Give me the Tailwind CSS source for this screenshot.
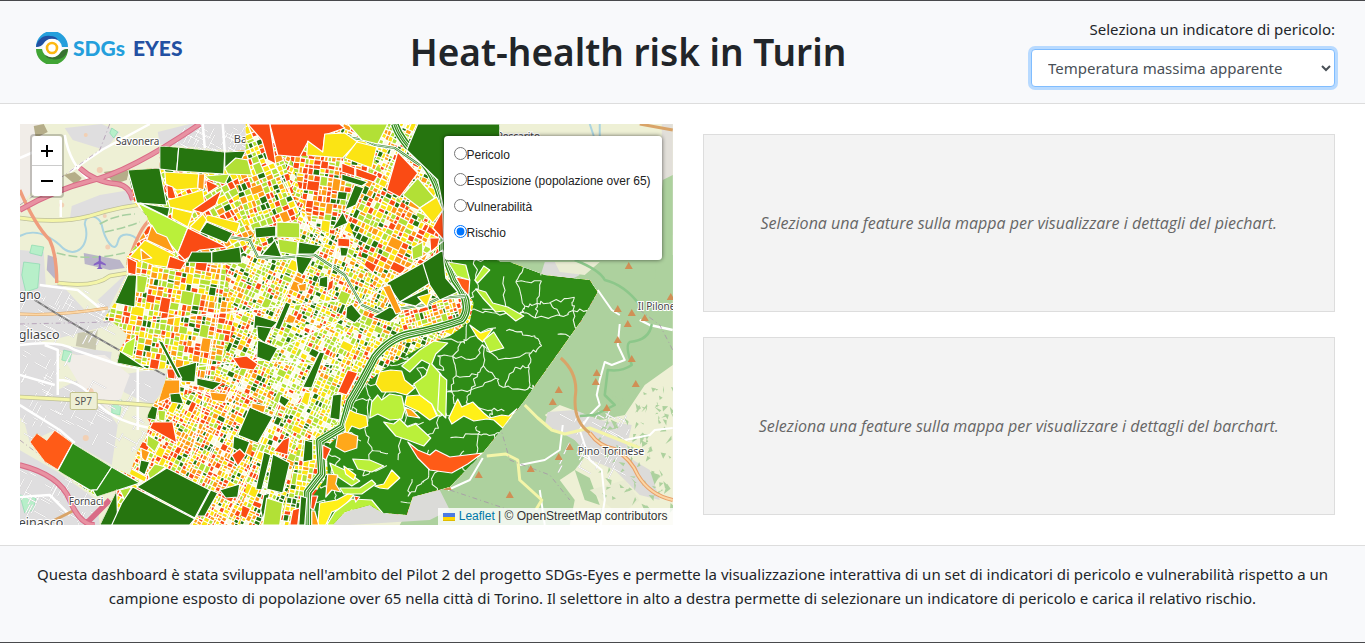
<!DOCTYPE html>
<html lang="it">
<head>
<meta charset="utf-8">
<meta name="viewport" content="width=device-width, initial-scale=1">
<title>Heat-health risk in Turin</title>
<script src="https://cdn.jsdelivr.net/npm/@tailwindcss/browser@4"></script>
</head>
<body class="flex min-h-screen flex-col border-y border-[#48494c] bg-white font-['Noto_Sans',sans-serif] text-[15px] leading-6 text-[#212529]">

<header class="flex items-center justify-between border-b border-[#ddd] bg-[#f8f9fb] px-[30px] py-4">
  <a href="#" class="flex w-[195px] items-center gap-[5px] pb-2 pl-[6px] font-[Lato,sans-serif] text-[21px] leading-8 font-black" aria-label="SDGs EYES">
    <svg class="size-8 shrink-0" viewBox="0 0 32 32" aria-hidden="true">
      <path d="M0 15A16 16 0 0 1 32 15H26A10 10 0 0 0 7 12Q5 14 0 15Z" fill="#249fdc"/>
      <path d="M0 15C1 8 7 3 14 4Q20 4 22 8Q12 4 7 12Q5 15 0 15Z" fill="#2250a2"/>
      <path d="M0 17A16 16 0 0 0 32 17Q27 17 25 20A10 10 0 0 1 6 17Z" fill="#41a535"/>
      <path d="M32 17C31 25 23 29 16 27Q11 27 9 23Q19 29 25 20Q27 17 32 17Z" fill="#387231"/>
      <circle cx="16" cy="16" r="9" fill="#fff"/>
      <circle cx="16" cy="16" r="5" fill="#fff" stroke="#fdb913" stroke-width="2.6"/>
    </svg>
    <span class="flex gap-2"><span class="text-[#249fdc]">SDGs</span><span class="text-[#2250a2]">EYES</span></span>
  </a>
  <h1 class="text-[37px] leading-[48px] font-semibold">Heat-health risk in Turin</h1>
  <div class="flex w-76 flex-col gap-2">
    <label for="indicator" class="text-right">Seleziona un indicatore di pericolo:</label>
    <select id="indicator" class="h-[38px] rounded border border-[#80bdff] bg-white px-3 text-[#495057] ring-3 ring-[#b8daff] outline-none">
      <option>Temperatura massima apparente</option>
    </select>
  </div>
</header>

<main class="grid grid-cols-2 gap-5 p-5">
  <section class="relative h-[401px] overflow-hidden bg-[#f2efe9] font-['Liberation_Sans',sans-serif]" aria-label="Mappa">
    <svg class="block h-full w-full" viewBox="20 124 653 401" preserveAspectRatio="xMidYMid slice" aria-hidden="true">
      <defs>
        <clipPath id="city"><path d="M160 146L225 152L246 150L246 124H500V262L510 262L545 275L590 280L598 292L582 320L523 403L483 453L450 487L413 497L407 515L383 513L370 505L345 512L333 525H100L117 490L97 497L58 470L45 462L30 442L37 433L47 440L55 430L73 443L112 467L130 475L137 452L147 435L150 422L147 417L153 405L160 397L167 377L168 368L147 370L117 363L120 350L128 335L113 322L103 320L115 303L127 275L127 257L135 247L148 227L148 217L135 203L128 170L160 168Z"/></clipPath>
        <clipPath id="hill"><path d="M443 252L510 262L545 275L590 280L598 292L582 320L523 403L483 453L450 487L413 497L407 515L383 513L370 505L345 512L333 525H312L314 495L328 475L327 447L345 430L352 405L368 382L390 365L420 348L450 336L470 322L474 303L458 275Z"/></clipPath>
      </defs>
      <!-- land cover -->
      <path d="M20 124H673V525H20Z" fill="#eef0d5"/>
      <g fill="#dfdedf">
        <path d="M20 340L60 345L112 352L110 365L60 350L58 390L78 380L75 440L20 418Z"/>
        <path d="M20 250L44 252L46 285L62 285L85 310L110 310L112 325L60 338L20 345Z"/>
        <path d="M120 375L150 370L168 374L160 395L152 405L140 400L124 392Z"/>
        <path d="M20 405L60 430L80 380L100 400L118 425L112 465L73 443L55 430L30 442Z"/>
        <path d="M20 450L58 472L97 500L100 525H20Z"/>
        <path d="M190 124H250V152L160 144L158 132Z"/>
        <path d="M73 140L105 150L120 132L102 124L65 128Z"/>
        <path d="M100 195L130 190L133 205L100 212L70 220L72 206Z"/>
        <path d="M98 300L128 272L108 310Z"/>
      </g>
      <path d="M20 124H40L45 140L34 190L20 205ZM62 355L105 355L130 375L115 415L80 385Z" fill="#f1ede8"/>
      <path d="M662 124H673V235H662Z" fill="#e2dfd9"/>
      <g fill="#b5ad89"><path d="M34 126L44 124L48 132L36 138ZM64 175L75 172L82 178L76 185ZM104 172L130 168L127 180L115 184Z"/><path d="M78 333L98 330L96 350L76 346Z" fill="#c9c8b0"/></g>
      <g fill="#add19e">
        <path d="M480 255H673V365L645 385L625 415L600 420L560 405L545 415L575 440L590 450L575 470L560 480L575 500L570 525H400L415 498L480 455L590 300Z"/>
        <path d="M663 180L673 175V300L655 280Z"/>
        <path d="M575 470L590 478L600 505L585 500ZM645 470L660 475L652 490Z"/>
      </g>
      <path d="M548 412L575 410L600 420L632 425L625 455L650 470L660 500L640 495L615 470L592 460L575 440L560 432L545 425Z" fill="#dcdbd9"/>
      <path d="M540 278L545 262L570 262L580 275L560 285ZM370 500L412 497L440 490L450 510L430 520L350 525H333L345 513Z" fill="#dbdbd8"/>
      <path d="M555 262L600 262L585 275L560 272ZM590 490L625 480L640 500L620 515Z" fill="#e9ecd2"/>
      <g fill="#b7efc9" stroke="#7fd7aa" stroke-width=".6"><path d="M24 262L40 264L38 288L26 292L22 275Z"/><path d="M32 245L44 247L42 256L30 253ZM64 350L72 352L70 362L62 360ZM112 402L122 400L120 415L112 413ZM112 128L118 132L114 138L110 133ZM20 495L36 498L34 510L25 513Z"/></g>
      <path d="M84 253L120 260L125 268L110 270L85 264ZM48 255L57 258L55 279L47 270Z" fill="#bab5c9"/>
      <g fill="#f2d0b4"><circle cx="100" cy="170" r="3"/><circle cx="86" cy="135" r="2"/><circle cx="62" cy="205" r="2.5"/><circle cx="108" cy="247" r="2.5"/><circle cx="90" cy="392" r="4"/><circle cx="86" cy="438" r="3"/><circle cx="105" cy="216" r="2"/></g>
      <g id="streets" fill="none" stroke="#fff" stroke-width="1"></g>
      <!-- water -->
      <path d="M20 236C35 228 50 236 60 245C75 262 92 245 85 224C86 212 100 216 102 225C105 240 115 255 118 242C120 232 132 232 140 242L148 236M590 124L594 136M600 124V136" fill="none" stroke="#aad3df" stroke-width="2"/>
      <path d="M57 253Q90 262 128 252M100 224Q115 215 135 214M105 232Q125 228 140 222" fill="none" stroke="#a7cfa0" stroke-width="1.5" stroke-dasharray="9 3"/>
      <!-- roads -->
      <g fill="none" stroke-linejoin="round">
        <path d="M20 345Q60 340 75 350L120 365L150 370M45 345L58 350V395M20 375L55 385M20 405L60 430L75 443M58 380Q80 380 95 400Q110 420 150 428M65 135Q70 165 90 180M61 200V217M40 285L78 290L105 312M20 158L50 145M138 360V430M70 172L102 150L150 124M203 124L205 148M223 124L225 152M20 497L50 495L70 515M673 330L650 325L640 320" stroke="#fff" stroke-width="2.5"/>
        <path d="M620 324L618 345L625 360L612 365L605 362L600 380L597 395L600 405L590 415L580 430L590 460L602 470L605 500L601 525M563 425L560 450L545 460L520 465M448 490L470 480L483 458M540 490L545 525M625 440L650 435L655 430L673 428M598 290L612 310L620 315" stroke="#fff" stroke-width="2"/>
        <path d="M20 218Q60 224 90 216Q125 205 150 204M58 283Q95 288 110 276L128 273M20 397Q85 400 160 406" stroke="#bdbe9a" stroke-width="4.4"/>
        <path d="M20 218Q60 224 90 216Q125 205 150 204M58 283Q95 288 110 276L128 273M20 397Q85 400 160 406M525 405L538 418L552 430L565 434L590 428L620 440L640 448" stroke="#f4f5a8" stroke-width="3"/>
        <path d="M487 456L506 454L518 460L520 480L542 500L536 510" stroke="#f4f5a8" stroke-width="3"/>
        <path d="M20 190Q35 225 50 240Q57 255 57 283M130 258Q140 228 150 220" stroke="#ef9d7d" stroke-width="3.4"/>
        <path d="M561 358Q577 372 576 392Q572 420 590 433M20 314Q60 316 108 308M640 124L673 130M45 525L75 510" stroke="#d9a468" stroke-width="3"/>
        <path d="M590 433Q600 447 615 449Q632 460 638 475Q650 495 673 500" stroke="#e7a06a" stroke-width="4"/>
        <path d="M590 433Q600 447 615 449Q632 460 638 475Q650 495 673 500M20 314Q60 316 108 308" stroke="#fcd6a4" stroke-width="2"/>
        <path d="M20 210Q55 190 90 181Q130 172 200 124M80 168Q95 182 118 184Q130 186 133 200M20 465Q60 475 70 500Q80 525 95 525M110 500L85 525" stroke="#d96b87" stroke-width="5.5"/>
        <path d="M20 210Q55 190 90 181Q130 172 200 124M80 168Q95 182 118 184Q130 186 133 200M20 465Q60 475 70 500Q80 525 95 525" stroke="#e892a2" stroke-width="3.5"/>
        <path d="M35 300Q90 335 165 375" stroke="#777" stroke-width="1.8"/>
        <path d="M35 300Q90 335 165 375" stroke="#ddd" stroke-width=".6" stroke-dasharray="4 4"/>
        <path d="M652 324Q650 340 630 342Q625 345 632 365Q622 372 608 370L605 395L615 405L595 415L580 416M575 260Q600 270 605 280Q625 285 640 305" stroke="#8cc78a" stroke-width="2.5"/>
        <path d="M20 205L65 175L100 150L110 124M20 324L110 322M20 440L60 470M500 425L510 460L550 475L570 500M640 310L660 325L673 350M450 490L510 510L530 525" stroke="#a58baa" stroke-width="1" stroke-dasharray="5 3 1 3" opacity=".7"/>
      </g>
      <g id="peaks" fill="#d08f55"></g>
      <g class="font-['Noto_Sans',sans-serif]" fill="#444" stroke="#fff" stroke-width="2" paint-order="stroke" font-size="10">
        <text x="116" y="145">Savonera</text>
        <text x="234" y="143" font-size="11">Bar</text>
        <text x="497" y="140">Pescarito</text>
        <text x="19" y="299" font-size="12">gno</text>
        <text x="19" y="339" font-size="12.5">gliasco</text>
        <text x="638" y="310">Il Pilone</text>
        <text x="578" y="455" font-size="10.5">Pino Torinese</text>
        <text x="69" y="505">Fornaci</text>
        <text x="19" y="527" font-size="12.5">einasco</text>
      </g>
      <rect x="70.500" y="392.500" width="27" height="17" rx="1.500" fill="#eeefd5" stroke="#c1c18a"/>
      <text x="75" y="405" class="font-['Noto_Sans',sans-serif]" font-size="10" fill="#555">SP7</text>
      <path d="M99 256Q100 255 101 256V261L106 264V265.500L101 264V267L103 269H97L99 267V264L94 265.500V264L99 261Z" fill="#8461c4"/>
      <!-- census sections, filled by the script below -->
      <g clip-path="url(#city)" stroke-linejoin="round">
        <path d="M20 124H673V525H20Z" fill="#fdfdf6"/>
        <g id="mesh"></g>
        <g id="hills" clip-path="url(#hill)"></g>
        <g id="avenues" fill="none"></g>
        <g id="sections" stroke="#fff" stroke-width="1.2"></g>
      </g>
    </svg>

    <div class="absolute top-[10px] left-[10px] flex flex-col rounded border-2 border-black/20 bg-clip-padding text-center text-[22px] leading-[30px] font-bold text-black">
      <button type="button" class="size-[30px] rounded-t-sm border-b border-[#ccc] bg-white" aria-label="Zoom in"><svg class="mx-auto size-3" viewBox="0 0 12 12"><path d="M6 0V12M0 6H12" stroke="#000" stroke-width="2"/></svg></button>
      <button type="button" class="size-[30px] rounded-b-sm bg-white" aria-label="Zoom out"><svg class="mx-auto size-3" viewBox="0 0 12 12"><path d="M0 6H12" stroke="#000" stroke-width="2"/></svg></button>
    </div>

    <fieldset class="absolute top-3 right-[11px] flex w-[218px] flex-col rounded bg-white px-[10px] pt-[6px] pb-[14px] text-xs leading-[26px] text-[#222] shadow-[0_0_4px_rgba(0,0,0,0.6)]">
      <label class="flex items-center"><input type="radio" name="layer" class="mb-1 size-[13px]"><span>Pericolo</span></label>
      <label class="flex items-center"><input type="radio" name="layer" class="mb-1 size-[13px]"><span class="whitespace-nowrap">Esposizione (popolazione over 65)</span></label>
      <label class="flex items-center"><input type="radio" name="layer" class="mb-1 size-[13px]"><span>Vulnerabilità</span></label>
      <label class="flex items-center"><input type="radio" name="layer" class="mb-1 size-[13px]" checked><span>Rischio</span></label>
    </fieldset>

    <div class="absolute right-0 bottom-0 flex items-center gap-1 bg-white/80 px-[5px] text-xs leading-[17px] text-[#333]">
      <svg class="h-2 w-3" viewBox="0 0 12 8" aria-hidden="true"><path fill="#4C7BE1" d="M0 0h12v4H0z"/><path fill="#FFD500" d="M0 4h12v3H0z"/><path fill="#E0BC00" d="M0 7h12v1H0z"/></svg>
      <span><a href="#" class="text-[#0078a8]">Leaflet</a> | © OpenStreetMap contributors</span>
    </div>
  </section>

  <section class="flex flex-col gap-[25px] p-[10px] font-['Open_Sans',sans-serif] text-base text-[#666] italic">
    <div class="flex flex-1 items-center justify-center border border-[#ddd] bg-[#f3f3f3] text-center"><p>Seleziona una feature sulla mappa per visualizzare i dettagli del piechart.</p></div>
    <div class="flex flex-1 items-center justify-center border border-[#ddd] bg-[#f3f3f3] text-center"><p>Seleziona una feature sulla mappa per visualizzare i dettagli del barchart.</p></div>
  </section>
</main>

<footer class="flex-1 border-t border-[#ddd] bg-[#f8f9fb] px-5 pt-4 text-center">
  <p>Questa dashboard è stata sviluppata nell'ambito del Pilot 2 del progetto SDGs-Eyes e permette la visualizzazione interattiva di un set di indicatori di pericolo e vulnerabilità rispetto a un campione esposto di popolazione over 65 nella città di Torino. Il selettore in alto a destra permette di selezionare un indicatore di pericolo e carica il relativo rischio.</p>
</footer>

<script>
const NS = 'http://www.w3.org/2000/svg';
let seed = 4711;
const rnd = () => { seed = (seed * 1664525 + 1013904223) >>> 0; return seed / 4294967296; };
const byId = id => document.getElementById(id);
const add = (parent, d, attrs) => {
  const p = document.createElementNS(NS, 'path');
  p.setAttribute('d', d);
  for (const k in attrs) p.setAttribute(k, attrs[k]);
  parent.appendChild(p);
  return p;
};
const D = '#26750f', G = '#2f8c17', L = '#b2e036', l = '#baf03a', Y = '#fbe414', O = '#fd9c17', R = '#fa4b14';

// Splits a rotated area into irregular blocks and colours each one
function blocks(clip, angle, size, weights) {
  const cp = document.createElementNS(NS, 'clipPath');
  cp.id = 'c' + byId('mesh').childNodes.length;
  add(cp, clip, {});
  byId('mesh').appendChild(cp);
  const outer = document.createElementNS(NS, 'g');
  outer.setAttribute('clip-path', `url(#${cp.id})`);
  byId('mesh').appendChild(outer);
  add(outer, clip, { fill: '#fff' });
  const n = clip.match(/-?\d+/g).map(Number);
  const xs = n.filter((_, i) => i % 2 === 0), ys = n.filter((_, i) => i % 2);
  const x0 = Math.min(...xs), x1 = Math.max(...xs), y0 = Math.min(...ys), y1 = Math.max(...ys);
  const cx = (x0 + x1) / 2, cy = (y0 + y1) / 2, r = Math.hypot(x1 - x0, y1 - y0) / 2;
  const g = document.createElementNS(NS, 'g');
  g.setAttribute('transform', `translate(${cx} ${cy}) rotate(${angle})`);
  outer.appendChild(g);
  const paths = {}, cols = [D, L, Y, O, R, '#fbfbe0'];
  const total = weights.reduce((a, b) => a + b, 0);
  const pick = () => { let t = rnd() * total, i = 0; while ((t -= weights[i]) > 0) i++; return cols[i]; };
  const split = (x, y, w, h) => {
    const stop = w < size * 1.5 && h < size * 1.5 || (w < size * 3 && h < size * 3 && rnd() < .07);
    if (stop) {
      const c = pick(), q = () => (rnd() - .5) * .5, e = .6;
      paths[c] = (paths[c] || '') + `M${(x + e + q()).toFixed(1)} ${(y + e + q()).toFixed(1)}L${(x + w - e + q()).toFixed(1)} ${(y + e + q()).toFixed(1)}L${(x + w - e + q()).toFixed(1)} ${(y + h - e + q()).toFixed(1)}L${(x + e + q()).toFixed(1)} ${(y + h - e + q()).toFixed(1)}Z`;
      return;
    }
    const t = .35 + rnd() * .3;
    if (w > h) { split(x, y, w * t, h); split(x + w * t, y, w * (1 - t), h); }
    else { split(x, y, w, h * t); split(x, y + h * t, w, h * (1 - t)); }
  };
  split(-r, -r, 2 * r, 2 * r);
  for (const c in paths) add(g, paths[c], { fill: c });
}
blocks('M20 124H673V525H20Z', 24, 4, [16, 26, 26, 19, 12, 10]);
blocks('M120 160H250L262 215L240 262L120 268Z', -28, 6, [13, 22, 30, 18, 26, 0]);
blocks('M235 124L275 124L300 215L265 250L240 215Z', -22, 5, [12, 26, 24, 18, 22, 2]);
blocks('M290 155L375 160L350 200L335 235L310 225Z', 8, 5, [12, 22, 10, 30, 34, 3]);
blocks('M100 262L225 262L235 330L200 410L100 410Z', 10, 5, [11, 22, 26, 20, 20, 4]);
blocks('M375 160L400 200L445 240L425 262L375 290L350 225Z', 26, 5, [12, 22, 24, 24, 26, 4]);
blocks('M140 405L225 385L260 400L240 525L100 525Z', 27, 4, [8, 14, 28, 26, 26, 3]);
blocks('M270 320L360 330L340 420L300 450L270 400Z', 26, 4, [8, 40, 22, 8, 5, 14]);
blocks('M400 305L465 292L465 325L400 345Z', -16, 4, [10, 15, 26, 32, 16, 4]);
blocks('M300 440L345 440L310 525L280 525Z', 10, 5, [18, 24, 30, 16, 14, 2]);

// Wooded hill sections with winding borders
const hills = byId('hills');
add(hills, 'M300 240H620V525H300Z', { fill: G });
const P = [];
for (let j = 0; j < 18; j++) { P.push([]); for (let i = 0; i < 20; i++) P[j].push([303 + i * 17 + (rnd() - .5) * 17, 250 + j * 17 + (rnd() - .5) * 17]); }
const wiggle = (a, b) => {
  let s = `M${a[0].toFixed(1)} ${a[1].toFixed(1)}`;
  for (let k = 1; k < 5; k++) s += `L${(a[0] + (b[0] - a[0]) * k / 5 + (rnd() - .5) * 4).toFixed(1)} ${(a[1] + (b[1] - a[1]) * k / 5 + (rnd() - .5) * 4).toFixed(1)}`;
  return s + `L${b[0].toFixed(1)} ${b[1].toFixed(1)}`;
};
let net = '';
for (let j = 0; j < 17; j++) for (let i = 0; i < 19; i++) {
  if (rnd() < .56) net += wiggle(P[j][i], P[j][i + 1]);
  if (rnd() < .5) net += wiggle(P[j][i], P[j + 1][i]);
}
add(hills, net, { fill: 'none', stroke: '#edf7e8', 'stroke-width': 1.1 });

// River banks and the main avenues
const river = 'M395 124Q400 140 420 158Q440 180 443 210V250L455 280Q474 305 462 320Q440 328 410 334Q390 338 375 357L360 385L350 402L343 427L320 441L322 474L308 492V525';
const dora = 'M215 235L250 240L258 257L280 258L315 255L345 275L362 305L378 312L425 305L440 298L465 296M320 124L330 134L365 140L375 145L395 148L420 165';
const av = byId('avenues');
for (const [c, w] of [['#fff', 9], [G, 7.500], ['#fff', 4.500], [G, 2.800], ['#dff0da', .8]]) add(av, river, { stroke: c, 'stroke-width': w });
for (const [c, w] of [['#fff', 4], ['#3d8b31', 2.200], ['#fff', .7]]) add(av, dora, { stroke: c, 'stroke-width': w });
add(av, 'M262 124L275 165L310 230L325 245M160 335L182 385L250 410L300 440M222 262L215 330L200 420L190 460M300 265L240 385L200 480L180 525M345 215L325 300L290 380L255 460L225 525M370 165L335 250M445 240L340 320L235 370M165 370L260 360L340 365M300 215L420 310M150 320L250 310L340 300', { stroke: '#fff', 'stroke-width': 1.5 });

// Larger sections drawn one by one
const shapes = [
[D,'160,146 179,147 177,171 160,169'],[D,'179,147 225,152 224,174 177,171'],[D,'225,152 246,151 240,163 225,168'],[L,'225,168 236,158 248,160 252,175 228,174'],
[D,'128,170 160,168 167,205 137,203'],[Y,'165,172 199,174 198,188 177,190 166,184'],[O,'199,174 205,174 204,190 198,188'],[R,'167,185 173,187 177,200 168,198'],
[Y,'168,200 203,190 205,203 193,212 170,207'],[L,'205,176 230,174 225,184 210,180'],[R,'206,180 219,186 208,193'],[D,'140,203 170,208 168,217'],[Y,'173,208 193,213 188,227 172,218'],
[R,'193,210 222,190 216,205 203,213'],[Y,'208,215 240,223 237,233 204,220'],[D,'207,222 233,233 227,243 200,232'],[Y,'190,227 203,214 207,220 200,232'],
[l,'138,203 167,217 188,228 178,253 167,240 157,234 149,222'],[O,'152,225 157,233 167,237 175,253 147,240'],[Y,'145,240 175,255 167,267 153,265 130,257'],[O,'141,249 152,258 142,260'],
[R,'188,228 227,247 200,250 185,260 178,253'],[D,'192,252 212,252 212,263 187,262'],[D,'212,252 240,247 242,263 212,263'],[R,'170,256 186,262 181,270 167,268'],
[D,'128,275 137,275 135,307 115,303'],[L,'137,275 148,277 145,293 137,292'],[R,'127,257 137,262 136,275 128,273'],
[R,'270,124 340,124 345,128 325,135 323,153 308,142 300,157 278,155'],[Y,'325,134 345,133 358,142 343,158 307,155 308,141 323,152'],[Y,'357,142 377,147 372,168 345,158'],
[L,'348,124 388,124 378,144 362,140'],[R,'398,152 418,173 400,197 387,190'],[L,'418,178 435,198 420,208 403,195'],[Y,'420,208 437,197 443,210 433,223'],
[D,'418,124 500,124 500,260 444,210 438,180 407,150'],[R,'342,163 355,168 355,176 342,172'],[R,'356,168 378,176 374,182 356,176'],[D,'342,174 368,182 362,186 342,180'],
[R,'248,124 270,124 276,164 268,160 262,140'],[D,'355,185 364,188 356,205 345,210'],[D,'343,212 348,223 332,230'],[L,'277,222 300,223 300,238 277,237'],
[L,'278,239 298,242 297,255 280,252'],[D,'299,242 322,246 314,254 298,254'],[D,'262,255 275,240 282,257'],[D,'255,228 276,226 276,236 256,238'],[D,'296,256 313,258 303,275 298,272'],
[R,'338,238 350,239 350,247 338,246'],[D,'340,247 349,248 347,256 341,256'],[R,'430,238 440,238 438,246 431,252'],[R,'443,210 444,240 433,228'],
[L,'412,248 423,242 423,256 413,260'],[D,'387,283 423,263 435,280 400,302'],[D,'423,263 443,250 446,278 458,292 440,300 430,285'],[D,'400,302 428,288 430,296 416,306'],
[D,'373,317 390,307 402,312 390,322'],[O,'383,287 390,285 402,312 396,314'],[Y,'418,297 432,293 427,307'],[D,'320,278 328,276 328,288 319,286'],[R,'329,282 334,279 333,288 327,292'],
[D,'347,307 352,304 362,316 355,323 346,318'],[D,'255,315 278,322 270,330 254,328'],[D,'286,302 291,304 280,330 275,328'],[O,'298,285 307,283 306,291 300,291'],
[D,'257,326 272,328 265,343 258,338'],[D,'258,340 278,348 270,362 257,357'],[R,'233,358 247,356 258,364 254,370 240,368'],
['#ff5b17','30,442 37,433 47,440 55,430 73,443 58,470 45,462'],[G,'73,443 112,467 97,490 90,490 58,471'],[G,'112,467 140,483 97,497 93,490 97,490'],
[D,'100,525 117,490 118,525'],[L,'120,490 132,487 125,500'],[Y,'130,468 147,477 145,482 129,474'],[L,'148,473 155,464 166,467 150,480'],[D,'167,468 210,490 195,518 137,487'],[D,'133,487 195,519 190,525 112,525 122,503'],
[D,'211,490 218,493 205,516 197,516'],[D,'220,490 240,484 238,497 226,498'],[D,'197,362 195,382 182,381 177,368'],[O,'165,380 180,380 180,393 158,403'],[R,'167,369 176,369 175,379 168,378'],[D,'170,394 180,393 184,404 171,402'],
[D,'120,351 147,369 117,363'],[l,'126,343 136,337 133,357 122,352'],[D,'158,340 163,342 182,378 178,378'],[D,'197,378 222,383 213,390 197,385'],[O,'210,392 228,394 225,402 212,400'],
[R,'153,422 173,422 177,443 150,428'],[D,'150,405 158,408 156,420 147,418'],[L,'158,410 166,411 165,421 159,420'],[L,'148,435 160,442 155,452 147,445'],[O,'141,448 150,452 146,462 142,458'],[D,'141,460 150,462 145,475 139,471'],
[D,'320,352 325,353 312,388 303,387'],[R,'348,370 358,373 347,395 338,392'],[R,'296,405 306,391 302,402'],[Y,'305,392 311,393 308,406 301,402'],
[D,'250,407 273,417 258,443 238,435'],[O,'252,403 266,406 264,413 252,408'],[D,'234,436 250,442 245,455 233,448'],[R,'232,455 240,449 246,455 238,466'],[D,'281,395 290,400 285,407 279,402'],
[R,'283,440 290,437 288,455 274,451'],[D,'273,454 290,463 283,493 267,489'],[D,'264,452 271,455 262,490 256,489'],[D,'264,495 270,493 263,520 261,510'],[L,'267,498 283,503 280,525 263,525'],
[R,'293,510 300,508 298,525 290,525'],[D,'301,496 307,498 305,525 299,525'],[D,'305,440 313,442 313,460 303,462'],[D,'333,395 342,394 340,420 330,418'],[R,'323,445 331,449 326,460 323,458'],
[Y,'350,410 356,413 367,416 368,426 360,429 352,426 346,436 345,424'],['#ffa81a','338,435 346,432 358,436 357,448 345,452 336,447'],
[Y,'380,372 391,370 402,371 405,380 415,388 407,395 396,392 382,392 376,384'],['#fff018','407,396 420,395 432,404 437,416 430,420 418,411 405,405'],['#ffa81a','405,407 412,410 420,418 408,416'],
[l,'420,350 434,341 448,343 436,354 432,364 441,374 447,390 444,414 438,416 432,404 420,395 414,384 426,375 430,364 422,360 410,372 402,366'],
[l,'372,402 378,395 382,400 390,394 402,396 405,410 402,419 390,420 378,414 370,418'],[l,'384,422 394,424 400,419 408,427 416,424 431,438 424,446 408,440 396,436'],
['#ff5b17','408,442 418,450 430,455 436,450 450,457 483,453 468,464 452,473 430,470 418,458'],
['#fff018','458,399 462,407 473,402 484,413 490,418 502,415 509,416 517,409 503,428 494,420 487,419 474,421 464,416 452,424 449,418'],
['#fff018','470,325 481,333 493,329 483,342 478,338'],[l,'484,340 494,332 504,348 490,352'],[l,'440,374 447,380 446,418 438,410'],
[l,'330,463 345,470 360,481 352,486 334,474'],[l,'353,459 370,460 384,466 372,472 358,469'],['#fff018','375,486 384,484 392,470 400,478 388,489 380,488'],['#ffa81a','328,474 338,475 336,484 341,492 332,490 326,497'],
[l,'340,488 360,488 372,480 376,484 362,494 344,494'],['#fff018','320,503 337,500 348,494 354,495 344,507 332,512 326,525 318,525'],[l,'335,512 352,499 372,500 382,512 388,519 370,514 352,510 334,525 327,525'],[R,'354,496 360,497 356,502'],['#fff018','344,466 356,475 354,480 346,474'],
[R,'312,496 318,496 314,510 311,508'],[O,'312,511 315,511 319,525 312,525'],
['#ff5b17','456,277 470,280 469,296 462,288'],[l,'448,262 466,265 470,280 457,276'],[l,'475,280 484,266 490,270 478,283'],[l,'476,289 486,292 493,303 508,307 524,316 516,321 504,311 496,312 483,298']
];
for (const [c, pts] of shapes) add(byId('sections'), 'M' + pts.replace(/ /g, 'L').replace(/,/g, ' ') + 'Z', { fill: c });

// Minor streets in the outlying towns
let st = '';
for (let i = 0; i < 260; i++) {
  const a = [[20, 345, 60, 90], [20, 290, 90, 50], [20, 470, 75, 55], [180, 124, 65, 28], [560, 410, 70, 60], [60, 380, 85, 70]][i % 6];
  const x = a[0] + rnd() * a[2], y = a[1] + rnd() * a[3], t = rnd() < .5 ? .5 : 2.05, k = 5 + rnd() * 12;
  st += `M${x.toFixed(1)} ${y.toFixed(1)}l${(Math.cos(t) * k).toFixed(1)} ${(Math.sin(t) * k).toFixed(1)}`;
}
add(byId('streets'), st, { stroke: '#c9c7c7', 'stroke-width': 1.4 });
add(byId('streets'), st, {});
let wood = '';
for (let i = 0; i < 110; i++) {
  const x = 600 + rnd() * 73, y = 385 + rnd() * 130;
  wood += `M${x.toFixed(1)} ${y.toFixed(1)}l${(rnd() * 7).toFixed(1)} ${(rnd() * 5).toFixed(1)}l${(-rnd() * 7).toFixed(1)} ${(rnd() * 6).toFixed(1)}Z`;
}
add(byId('streets'), wood, { fill: '#add19e', stroke: 'none' });
for (const [x, y] of [[629, 266], [671, 297], [618, 309], [632, 313], [645, 318], [628, 324], [597, 373], [618, 340], [632, 359], [596, 382], [559, 390], [553, 402], [607, 408], [636, 384], [570, 447], [559, 457], [531, 469], [479, 475], [510, 495], [448, 487]])
  add(byId('peaks'), `M${x} ${y - 4}l4 7h-8Z`, {});
</script>
</body>
</html>
